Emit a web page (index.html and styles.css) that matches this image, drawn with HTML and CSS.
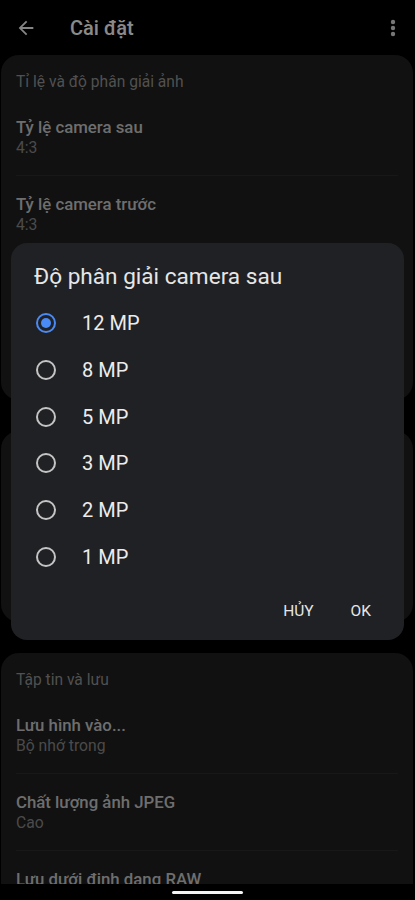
FILE: index.html
```html
<!DOCTYPE html>
<html>
<head>
    <title>Cài đặt</title>
    <link rel="stylesheet" href="styles.css">
</head>
<body>
    <div class="screen">
        <header class="top-bar">
            <svg class="back-icon" viewBox="0 0 24 24" width="22" height="22">
                <path d="M20 11H7.83l5.59-5.59L12 4l-8 8 8 8 1.41-1.41L7.83 13H20v-2z" fill="#f2f2f2"/>
            </svg>
            <h1 class="page-title">Cài đặt</h1>
            <svg class="menu-icon" viewBox="0 0 6 18" width="6" height="18">
                <circle cx="3" cy="3" r="2.2" fill="#d8d8d8"/>
                <circle cx="3" cy="9" r="2.2" fill="#d8d8d8"/>
                <circle cx="3" cy="15" r="2.2" fill="#d8d8d8"/>
            </svg>
        </header>

        <section class="card">
            <div class="section-title">Tỉ lệ và độ phân giải ảnh</div>
            <div class="item">
                <div class="item-title">Tỷ lệ camera sau</div>
                <div class="item-value">4:3</div>
            </div>
            <div class="item">
                <div class="item-title">Tỷ lệ camera trước</div>
                <div class="item-value">4:3</div>
            </div>
            <div class="item">
                <div class="item-title">Độ phân giải camera sau</div>
                <div class="item-value">12 MP</div>
            </div>
            <div class="item">
                <div class="item-title">Độ phân giải camera trước</div>
                <div class="item-value">8 MP</div>
            </div>
        </section>

        <section class="card">
            <div class="section-title">Chụp ảnh</div>
            <div class="item">
                <div class="item-title">Âm thanh màn trập</div>
                <div class="item-value">Bật</div>
            </div>
            <div class="item">
                <div class="item-title">Hẹn giờ</div>
                <div class="item-value">Tắt</div>
            </div>
        </section>

        <section class="card">
            <div class="section-title">Tập tin và lưu</div>
            <div class="item">
                <div class="item-title">Lưu hình vào...</div>
                <div class="item-value">Bộ nhớ trong</div>
            </div>
            <div class="item">
                <div class="item-title">Chất lượng ảnh JPEG</div>
                <div class="item-value">Cao</div>
            </div>
            <div class="item">
                <div class="item-title">Lưu dưới định dạng RAW</div>
                <div class="item-value">Tắt</div>
            </div>
        </section>
    </div>

    <div class="scrim"></div>

    <div class="dialog">
        <h2 class="dialog-title">Độ phân giải camera sau</h2>
        <div class="options">
            <label class="option"><span class="radio checked"></span>12 MP</label>
            <label class="option"><span class="radio"></span>8 MP</label>
            <label class="option"><span class="radio"></span>5 MP</label>
            <label class="option"><span class="radio"></span>3 MP</label>
            <label class="option"><span class="radio"></span>2 MP</label>
            <label class="option"><span class="radio"></span>1 MP</label>
        </div>
        <div class="dialog-actions">
            <button type="button" class="text-button">HỦY</button>
            <button type="button" class="text-button">OK</button>
        </div>
    </div>

    <div class="nav-bar"><span class="nav-handle"></span></div>
</body>
</html>
```

FILE: styles.css
```css
html {
    overflow: hidden;
}
body {
    margin: 0;
    background-color: #000;
    font-family: Roboto, "Noto Sans", sans-serif;
    width: 415px;
    height: 900px;
    overflow: hidden;
    position: relative;
}
.screen {
    display: flex;
    flex-direction: column;
}
.top-bar {
    height: 55px;
    display: flex;
    align-items: center;
    padding: 0 19px 0 15px;
}
.back-icon {
    display: block;
}
.page-title {
    margin: 0 0 0 33px;
    flex: 1;
    font-size: 20px;
    font-weight: 500;
    color: #fcfcfc;
}
.menu-icon {
    display: block;
}
.card {
    margin: 0 2px 31px 1px;
    background-color: #1f1f1f;
    border-radius: 18px;
}
.section-title {
    padding: 17px 15px 7px;
    font-size: 15.6px;
    line-height: 20px;
    color: #929292;
}
.item {
    padding: 17px 0;
    margin: 0 15px;
    border-bottom: 1px solid #2c2c2c;
}
.item:last-child {
    border-bottom: none;
    padding-bottom: 11px;
}
.item-title {
    font-size: 16.8px;
    font-weight: 500;
    line-height: 22px;
    color: #c8c8c8;
}
.item-value {
    font-size: 15.7px;
    line-height: 20px;
    color: #888;
}
.scrim {
    position: absolute;
    inset: 0;
    background-color: rgba(0, 0, 0, 0.45);
}
.dialog {
    position: absolute;
    left: 11px;
    top: 243px;
    width: 393px;
    height: 397px;
    box-sizing: border-box;
    background-color: #202124;
    border-radius: 16px;
    padding: 22px 0 11px;
    display: flex;
    flex-direction: column;
}
.dialog-title {
    margin: 0 0 11px 23px;
    font-size: 22.6px;
    font-weight: 400;
    line-height: 24px;
    color: #e6e6e6;
}
.options {
    display: flex;
    flex-direction: column;
}
.option {
    height: 46.67px;
    display: flex;
    align-items: center;
    padding-left: 25px;
    font-size: 20px;
    color: #ececec;
}
.radio {
    width: 16px;
    height: 16px;
    border: 2px solid #c4c4c4;
    border-radius: 50%;
    margin-right: 26px;
    box-sizing: content-box;
    position: relative;
}
.radio.checked {
    border-color: #4a8af4;
}
.radio.checked::after {
    content: "";
    position: absolute;
    left: 3px;
    top: 3px;
    width: 10px;
    height: 10px;
    border-radius: 50%;
    background-color: #4a8af4;
}
.dialog-actions {
    margin-top: auto;
    display: flex;
    justify-content: flex-end;
    gap: 13px;
    padding-right: 21px;
}
.text-button {
    background: none;
    border: none;
    padding: 0 12px;
    height: 36px;
    font-family: Roboto, "Noto Sans", sans-serif;
    font-size: 15.5px;
    font-weight: 400;
    color: #e6e6e6;
}
.nav-bar {
    position: absolute;
    left: 0;
    right: 0;
    bottom: 0;
    height: 16px;
    background-color: #000;
    display: flex;
    justify-content: center;
    align-items: center;
}
.nav-handle {
    width: 71px;
    height: 3px;
    border-radius: 2px;
    background-color: #f4f4f4;
}
```
